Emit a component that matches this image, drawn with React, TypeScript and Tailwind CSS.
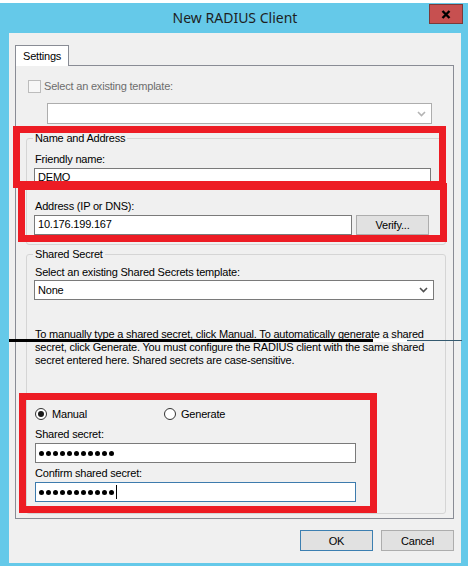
const ui = "font-['Liberation_Sans',Arial,sans-serif]";

function Chevron({ color }: { color: string }) {
  return (
    <svg width="9" height="6" viewBox="0 0 9 6" fill="none">
      <path d="M1 1l3.5 3.5L8 1" stroke={color} strokeWidth="1.6" />
    </svg>
  );
}

function Dots() {
  return (
    <div className="flex gap-[2px]">
      {Array.from({ length: 11 }).map((_, i) => (
        <span key={i} className="w-[5px] h-[5px] rounded-full bg-black" />
      ))}
    </div>
  );
}

function Radio({ checked, label }: { checked?: boolean; label: string }) {
  return (
    <div className="flex items-center gap-[5px]">
      <span className="w-[12px] h-[12px] rounded-full border border-[#333] bg-white flex items-center justify-center">
        {checked && <span className="w-[6px] h-[6px] rounded-full bg-[#1a1a1a]" />}
      </span>
      <span>{label}</span>
    </div>
  );
}

export default function App() {
  return (
    <div className={`relative w-[470px] h-[566px] overflow-hidden bg-white ${ui} text-[11px] tracking-[-0.2px] leading-[16px] text-black`}>
      {/* window frame */}
      <div className="mt-[3px] w-[468px] h-[563px] bg-[#65c9e9] pl-[9px] pr-[7px] flex flex-col">
        <div className="relative h-[30px] flex justify-center pt-[5px]">
          <span className="font-['Noto_Sans',sans-serif] tracking-normal text-[14px] leading-[20px] text-[#1e1e1e]">
            New RADIUS Client
          </span>
          <div className="absolute right-[-2px] top-[1px] w-[34px] h-[20px] bg-[#c75050] border border-[#7b3a3a] flex items-center justify-center">
            <svg width="10" height="9" viewBox="0 0 10 9">
              <path d="M1.5 1l7 7M8.5 1l-7 7" stroke="#000" strokeWidth="2.4" />
            </svg>
          </div>
        </div>

        {/* client area */}
        <div className="h-[530px] bg-[#f0f0f0] px-[6px] pt-[12px]">
          <div className="relative z-10 -mb-px w-[54px] h-[21px] bg-white border border-b-0 border-[#898c95] pl-[7px] pt-[2px]">
            Settings
          </div>
          <div className="w-[439px] h-[454px] border border-[#898c95] bg-[#f0f0f0]">
            <div className="flex items-center gap-[3px] mt-[12px] ml-[12px] text-[#6d6d6d]">
              <span className="w-[13px] h-[13px] border border-[#bcbcbc] bg-[#f7f7f7]" />
              <span>Select an existing template:</span>
            </div>
            <div className="mt-[9px] ml-[31px] w-[385px] h-[21px] border border-[#adadad] bg-white flex items-center justify-end pr-[5px]">
              <Chevron color="#b4b4b4" />
            </div>

            {/* Name and Address */}
            <div className="relative mt-[14px] ml-[10px] w-[420px] h-[107px] border border-[#d5d5d5] rounded-[3px]">
              <span className="absolute left-[6px] top-[-9px] px-[2px] bg-[#f0f0f0]">Name and Address</span>
              <div className="mt-[12px] pl-[8px]">Friendly name:</div>
              <div className="mt-[1px] ml-[7px] w-[397px] h-[20px] border border-[#7a7a7a] bg-white pl-[3px] leading-[16px]">
                DEMO
              </div>
              <div className="mt-[10px] pl-[8px]">Address (IP or DNS):</div>
              <div className="mt-[1px] ml-[7px] flex gap-[4px]">
                <div className="w-[318px] h-[20px] border border-[#7a7a7a] bg-white pl-[3px] leading-[17px]">
                  10.176.199.167
                </div>
                <div className="w-[73px] h-[20px] border border-[#adadad] bg-[#e1e1e1] flex items-center justify-center">
                  Verify...
                </div>
              </div>
            </div>

            {/* Shared Secret */}
            <div className="relative mt-[9px] ml-[10px] w-[420px] h-[260px] border border-[#d5d5d5] rounded-[3px]">
              <span className="absolute left-[6px] top-[-9px] px-[2px] bg-[#f0f0f0]">Shared Secret</span>
              <div className="mt-[9px] pl-[8px]">Select an existing Shared Secrets template:</div>
              <div className="ml-[7px] w-[400px] h-[20px] border border-[#7a7a7a] bg-white flex items-center justify-between pl-[3px] pr-[5px]">
                <span>None</span>
                <Chevron color="#505050" />
              </div>
              <p className="mt-[28px] pl-[8px] leading-[13px] whitespace-nowrap">
                To manually type a shared secret, click Manual. To automatically generate a shared
                <br />
                secret, click Generate. You must configure the RADIUS client with the same shared
                <br />
                secret entered here. Shared secrets are case-sensitive.
              </p>
              <div className="mt-[39px] pl-[8px] h-[16px] flex items-center">
                <div className="w-[129px]">
                  <Radio checked label="Manual" />
                </div>
                <Radio label="Generate" />
              </div>
              <div className="mt-[4px] pl-[8px]">Shared secret:</div>
              <div className="mt-[1px] ml-[8px] w-[321px] h-[20px] border border-[#7a7a7a] bg-white pl-[3px] flex items-center">
                <Dots />
              </div>
              <div className="mt-[2px] pl-[8px]">Confirm shared secret:</div>
              <div className="mt-[1px] ml-[8px] w-[321px] h-[20px] border border-[#3d7bad] bg-white pl-[3px] flex items-center gap-[2px]">
                <Dots />
                <span className="w-px h-[14px] bg-black" />
              </div>
            </div>
          </div>

          <div className="w-[439px] mt-[11px] flex justify-end gap-[8px]">
            <div className="w-[73px] h-[21px] border border-[#3c7fb1] bg-[#e1e1e1] flex items-center justify-center">OK</div>
            <div className="w-[73px] h-[21px] border border-[#adadad] bg-[#e1e1e1] flex items-center justify-center">Cancel</div>
          </div>
        </div>
      </div>

      {/* annotations drawn over the screenshot */}
      <div className="absolute left-[13px] top-[126px] w-[433px] h-[62px] border-[7px] border-[#ed1c24]" />
      <div className="absolute left-[18px] top-[183px] w-[429px] h-[59px] border-[7px] border-[#ed1c24]" />
      <div className="absolute left-[19px] top-[393px] w-[358px] h-[120px] border-[7px] border-[#ed1c24]" />
      <div className="absolute left-[9px] top-[339px] w-[364px] h-[3px] bg-black" />
      <div className="absolute left-[373px] top-[339px] w-[34px] h-[3px] bg-white" />
      <div className="absolute left-[407px] top-[340px] w-[55px] h-px bg-[#34596f]" />
    </div>
  );
}
